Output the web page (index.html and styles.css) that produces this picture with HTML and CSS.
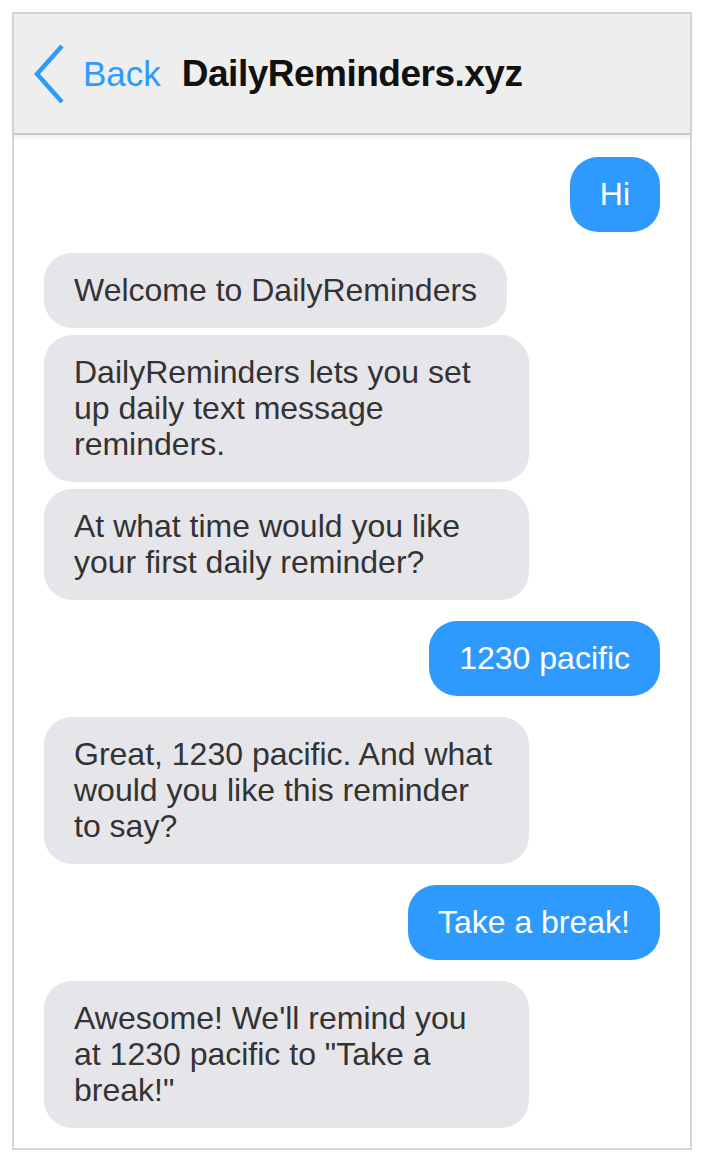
FILE: index.html
```html
<!DOCTYPE html>
<html lang="en">
<head>
    <meta charset="UTF-8">
    <meta name="viewport" content="width=device-width, initial-scale=1.0">
    <title>DailyReminders.xyz</title>
    <link rel="stylesheet" href="styles.css">
</head>
<body>
    <div class="phone">
        <div class="topbar">
            <a class="back" href="#">
                <svg class="chevron" width="30" height="58" viewBox="0 0 30 58">
                    <polyline points="28,1 3,29 28,57" fill="none" stroke="#2e9afe" stroke-width="4.5"/>
                </svg>
                <span>Back</span>
            </a>
            <h1>DailyReminders.xyz</h1>
        </div>

        <div class="chat">
            <div class="msg out">Hi</div>

            <div class="group">
                <div class="msg in">Welcome to DailyReminders</div>
                <div class="msg in">DailyReminders lets you set up daily text message reminders.</div>
                <div class="msg in">At what time would you like your first daily reminder?</div>
            </div>

            <div class="msg out">1230 pacific</div>

            <div class="msg in">Great, 1230 pacific. And what would you like this reminder to say?</div>

            <div class="msg out">Take a break!</div>

            <div class="msg in">Awesome! We'll remind you at 1230 pacific to "Take a break!"</div>
        </div>
    </div>
</body>
</html>
```

FILE: styles.css
```css
body {
    margin: 0;
    padding: 12px;
    font-family: "Liberation Sans", Arial, sans-serif;
    background: white;
}
.phone {
    width: 676px;
    border: 2px solid #d6d6d6;
    background: white;
}
.topbar {
    display: flex;
    align-items: center;
    height: 119px;
    padding-left: 20px;
    background: #eeeeee;
    border-bottom: 2px solid #c8c8c8;
    box-shadow: 0 2px 4px rgba(0,0,0,0.08);
}
.back {
    display: flex;
    align-items: center;
    gap: 19px;
    color: #2e9afe;
    text-decoration: none;
    font-size: 35px;
    margin-right: 21px;
}
.chevron {
    display: block;
}
h1 {
    margin: 0;
    font-size: 37px;
    font-weight: bold;
    color: #111;
    letter-spacing: -0.5px;
}
.chat {
    display: flex;
    flex-direction: column;
    gap: 21px;
    padding: 22px 30px 20px 30px;
}
.group {
    display: flex;
    flex-direction: column;
    gap: 7px;
}
.msg {
    font-size: 32px;
    line-height: 36px;
    padding: 19px 30px 20px 30px;
    border-radius: 28px;
    max-width: 425px;
}
.msg.in {
    align-self: flex-start;
    background: #e5e5ea;
    color: #333;
}
.msg.out {
    align-self: flex-end;
    background: #2e9afe;
    color: white;
}
```
